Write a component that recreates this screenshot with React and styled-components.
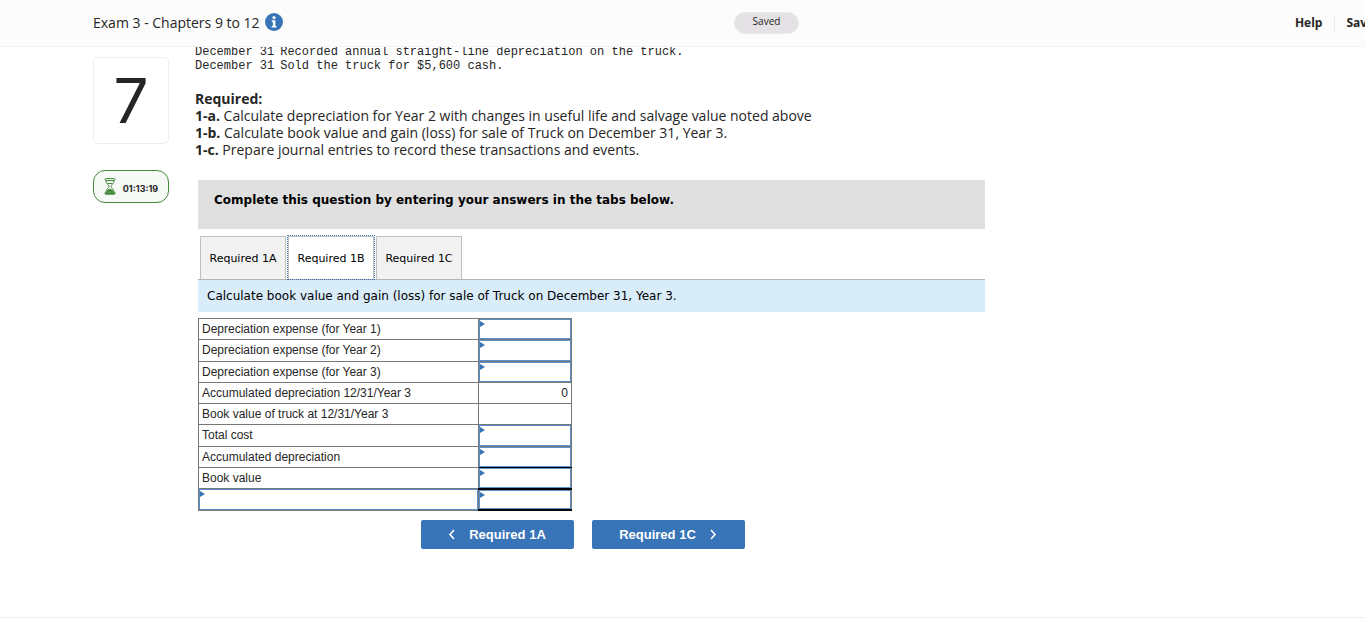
import { useState } from 'react';
import styled, { createGlobalStyle } from 'styled-components';

const entries = [
  { date: 'December 31', text: 'Recorded annual straight-line depreciation on the truck.' },
  { date: 'December 31', text: 'Sold the truck for $5,600 cash.' },
]

const requirements = [
  { id: '1-a.', text: 'Calculate depreciation for Year 2 with changes in useful life and salvage value noted above' },
  { id: '1-b.', text: 'Calculate book value and gain (loss) for sale of Truck on December 31, Year 3.' },
  { id: '1-c.', text: 'Prepare journal entries to record these transactions and events.' },
]

const tabs = ['Required 1A', 'Required 1B', 'Required 1C']

const rows = [
  { label: 'Depreciation expense (for Year 1)', input: true },
  { label: 'Depreciation expense (for Year 2)', input: true },
  { label: 'Depreciation expense (for Year 3)', input: true },
  { label: 'Accumulated depreciation 12/31/Year 3', value: '0' },
  { label: 'Book value of truck at 12/31/Year 3', value: '' },
  { label: 'Total cost', input: true },
  { label: 'Accumulated depreciation', input: true, rule: 1 },
  { label: 'Book value', input: true, rule: 2 },
  { input: true, rule: 2 },
]

function App() {
  const [activeTab, setActiveTab] = useState('Required 1B')

  return (
    <>
      <GlobalStyle />
      <Header>
        <HeaderInner>
          <Title>
            Exam 3 - Chapters 9 to 12
            <InfoButton aria-label="Assignment info">
              <svg width="18" height="18" viewBox="0 0 18 18">
                <circle cx="9" cy="9" r="9" fill="#3874b8" />
                <circle cx="9" cy="4.6" r="1.6" fill="#fff" />
                <path d="M6.8 7.3h3.6v5.6h1.1v1.7H6.7v-1.7h1.2V9H6.8z" fill="#fff" />
              </svg>
            </InfoButton>
          </Title>
          <Saved>Saved</Saved>
          <Actions>
            <a href="#help">Help</a>
            <a href="#save">Save &amp; Exit</a>
          </Actions>
        </HeaderInner>
      </Header>

      <Main>
        <Side>
          <QuestionNumber>7</QuestionNumber>
          <Timer>
            <svg width="12" height="17" viewBox="0 0 12 17" fill="none" stroke="#468a3c">
              <rect x="1" y="0.6" width="10" height="2" rx="1" />
              <rect x="1" y="14.2" width="10" height="2" rx="1" fill="#468a3c" />
              <path d="M2 2.8c0 3 3 3.9 3 5.6s-3 2.6-3 5.6M10 2.8c0 3-3 3.9-3 5.6s3 2.6 3 5.6M3.500 5.500h5" />
              <path d="M3 13.6c.4-1.7 1.8-2.2 3-2.200s2.600.5 3 2.200z" fill="#468a3c" />
            </svg>
            <time>01:13:19</time>
          </Timer>
        </Side>

        <Question>
          <Entries>
            <tbody>
              {entries.map((el) => (
                <tr key={el.text}>
                  <td>{el.date}</td>
                  <td>{el.text}</td>
                </tr>
              ))}
            </tbody>
          </Entries>

          <Required>
            <h2>Required:</h2>
            {requirements.map((el) => (
              <p key={el.id}><b>{el.id}</b> {el.text}</p>
            ))}
          </Required>

          <Worksheet>
            <Banner>Complete this question by entering your answers in the tabs below.</Banner>
            <Tabs role="tablist">
              {tabs.map((tab) => (
                <Tab key={tab} role="tab" $active={tab === activeTab} aria-selected={tab === activeTab} onClick={() => setActiveTab(tab)}>
                  {tab}
                </Tab>
              ))}
            </Tabs>
            <Instruction>Calculate book value and gain (loss) for sale of Truck on December 31, Year 3.</Instruction>

            <Sheet>
              <tbody>
                {rows.map((row, i) => (
                  <tr key={i}>
                    <Cell $input={!row.label}>
                      {row.label
                        ? <label htmlFor={`amount-${i}`}>{row.label}</label>
                        : <Field aria-label="Gain or loss" />}
                    </Cell>
                    <ValueCell $input={row.input} $rule={row.rule}>
                      {row.input
                        ? <Field id={`amount-${i}`} aria-label={row.label || 'Amount'} />
                        : <output id={`amount-${i}`}>{row.value}</output>}
                    </ValueCell>
                  </tr>
                ))}
              </tbody>
            </Sheet>

            <Pager>
              <PageButton onClick={() => setActiveTab('Required 1A')}>
                <Chevron d="M6 1 2 5.500 6 10" />
                Required 1A
              </PageButton>
              <PageButton onClick={() => setActiveTab('Required 1C')}>
                Required 1C
                <Chevron d="M2 1 6 5.500 2 10" />
              </PageButton>
            </Pager>
          </Worksheet>
        </Question>
      </Main>
      <Footer />
    </>
  )
}

function Chevron({ d }) {
  return (
    <svg width="8" height="11" viewBox="0 0 8 11" fill="none" stroke="#fff" strokeWidth="1.6">
      <path d={d} />
    </svg>
  )
}

const GlobalStyle = createGlobalStyle`
  * {
    box-sizing: border-box;
  }
  body {
    margin: 0;
    background: #fff;
    color: #262626;
    font-family: "Open Sans", sans-serif;
    overflow: hidden;
  }
`
const Header = styled.header`
  position: fixed;
  top: 0;
  left: 0;
  right: 0;
  z-index: 1;
  height: 47px;
  overflow: hidden;
  background: #fcfcfc;
  border-bottom: 1px solid #f2f2f2;
`
const HeaderInner = styled.div`
  display: grid;
  grid-template-columns: 1fr auto 1fr;
  align-items: center;
  height: 45px;
  width: calc(100% - 18px);
  margin-left: 93px;
`
const Title = styled.div`
  display: flex;
  align-items: center;
  gap: 5px;
  font-size: 14px;
`
const InfoButton = styled.button`
  display: flex;
  padding: 0 0 2px;
  border: 0;
  background: none;
`
const Saved = styled.span`
  width: 65px;
  height: 22px;
  border: 1px solid #eceaec;
  border-radius: 11px;
  background: #e4e2e5;
  font-size: 10px;
  line-height: 17px;
  text-align: center;
`
const Actions = styled.nav`
  display: flex;
  justify-content: flex-end;
  padding-right: 28px;
  a {
    padding-left: 11px;
    color: #262626;
    font-size: 12px;
    font-weight: 700;
    line-height: 18px;
    text-decoration: none;
    white-space: nowrap;
  }
  a + a {
    margin-left: 12px;
    border-left: 1px solid #eee;
  }
`
const Main = styled.main`
  display: flex;
  gap: 26px;
  padding: 45px 0 0 93px;
`
const Side = styled.aside`
  display: flex;
  flex-direction: column;
  gap: 26px;
  width: 76px;
  padding-top: 12px;
`
const QuestionNumber = styled.div`
  display: flex;
  align-items: center;
  justify-content: center;
  height: 87px;
  border: 1px solid #eee;
  border-radius: 5px;
  font-family: Inter, sans-serif;
  font-size: 62px;
`
const Timer = styled.div`
  display: flex;
  align-items: center;
  justify-content: center;
  gap: 7px;
  height: 33px;
  border: 1px solid #468a3c;
  border-radius: 12px;
  background: #f6f9f6;
  font-family: Inter, sans-serif;
  font-size: 9px;
  font-weight: 700;
  time {
    padding-top: 4px;
  }
`
const Question = styled.section`
  flex: 1;
  max-width: 790px;
`
const Entries = styled.table`
  border-collapse: collapse;
  font-family: "Liberation Mono", monospace;
  font-size: 12px;
  line-height: 14px;
  td {
    padding: 0 6px 0 0;
  }
`
const Required = styled.div`
  margin-top: 17px;
  font-size: 14px;
  line-height: 17px;
  h2, p {
    margin: 0;
    font-size: inherit;
  }
`
const Worksheet = styled.div`
  margin: 22px 0 0 3px;
  color: #000;
  font-family: "DejaVu Sans", sans-serif;
`
const Banner = styled.div`
  height: 49px;
  padding: 13px 16px;
  background: #e0e0e0;
  font-size: 12px;
  font-weight: 700;
  line-height: 15px;
`
const Tabs = styled.div`
  display: flex;
  gap: 2px;
  padding: 7px 0 0 2px;
  border-bottom: 1px solid #b5b5b5;
`
const Tab = styled.button`
  width: 86px;
  height: 43px;
  padding: 0;
  border: 1px solid #c0c0c0;
  border-width: 1px 1px 0;
  background: ${(props) => (props.$active ? '#fff' : '#f2f2f2')};
  outline: ${(props) => (props.$active ? '1px dotted #3874b8' : 'none')};
  color: #000;
  font-family: inherit;
  font-size: 11px;
`
const Instruction = styled.p`
  margin: 0;
  padding: 8px 9px;
  background: #d9ecfa;
  font-size: 12px;
  line-height: 16px;
`
const Sheet = styled.table`
  width: 374px;
  height: 193px;
  margin-top: 6px;
  border-collapse: collapse;
  table-layout: fixed;
  color: #262626;
  font-family: "Liberation Sans", sans-serif;
  font-size: 12px;
  line-height: 14px;
`
const Cell = styled.td`
  position: relative;
  width: 280px;
  height: 21px;
  padding: ${(props) => (props.$input ? '0' : '0 3px')};
  border: 1px solid #777;
  /* blue corner flag on editable cells */
  ${(props) => props.$input && `
    &::before {
      content: '';
      position: absolute;
      top: 2px;
      left: 1px;
      border: solid transparent;
      border-width: 3px 0 3px 5px;
      border-left-color: #3874b8;
    }
  `}
`
const ValueCell = styled(Cell)`
  width: auto;
  text-align: right;
  ${(props) => props.$rule && `border-bottom: ${props.$rule}px solid #000;`}
`
const Field = styled.input`
  display: block;
  width: 100%;
  height: 100%;
  min-height: 18px;
  padding: 0 3px;
  border: 1px solid #5b8fca;
  border-radius: 0;
  outline: 0;
  background: #fff;
  font: inherit;
`
const Pager = styled.div`
  display: flex;
  justify-content: center;
  gap: 18px;
  margin-top: 9px;
  padding-right: 18px;
`
const PageButton = styled.button`
  display: flex;
  align-items: center;
  justify-content: center;
  gap: 13px;
  width: 153px;
  height: 29px;
  border: 0;
  border-radius: 2px;
  background: #3874b8;
  color: #fff;
  font-family: "Liberation Sans", sans-serif;
  font-size: 13px;
  font-weight: 700;
`
const Footer = styled.footer`
  margin-top: 68px;
  border-top: 1px solid #eee;
`
export default App
